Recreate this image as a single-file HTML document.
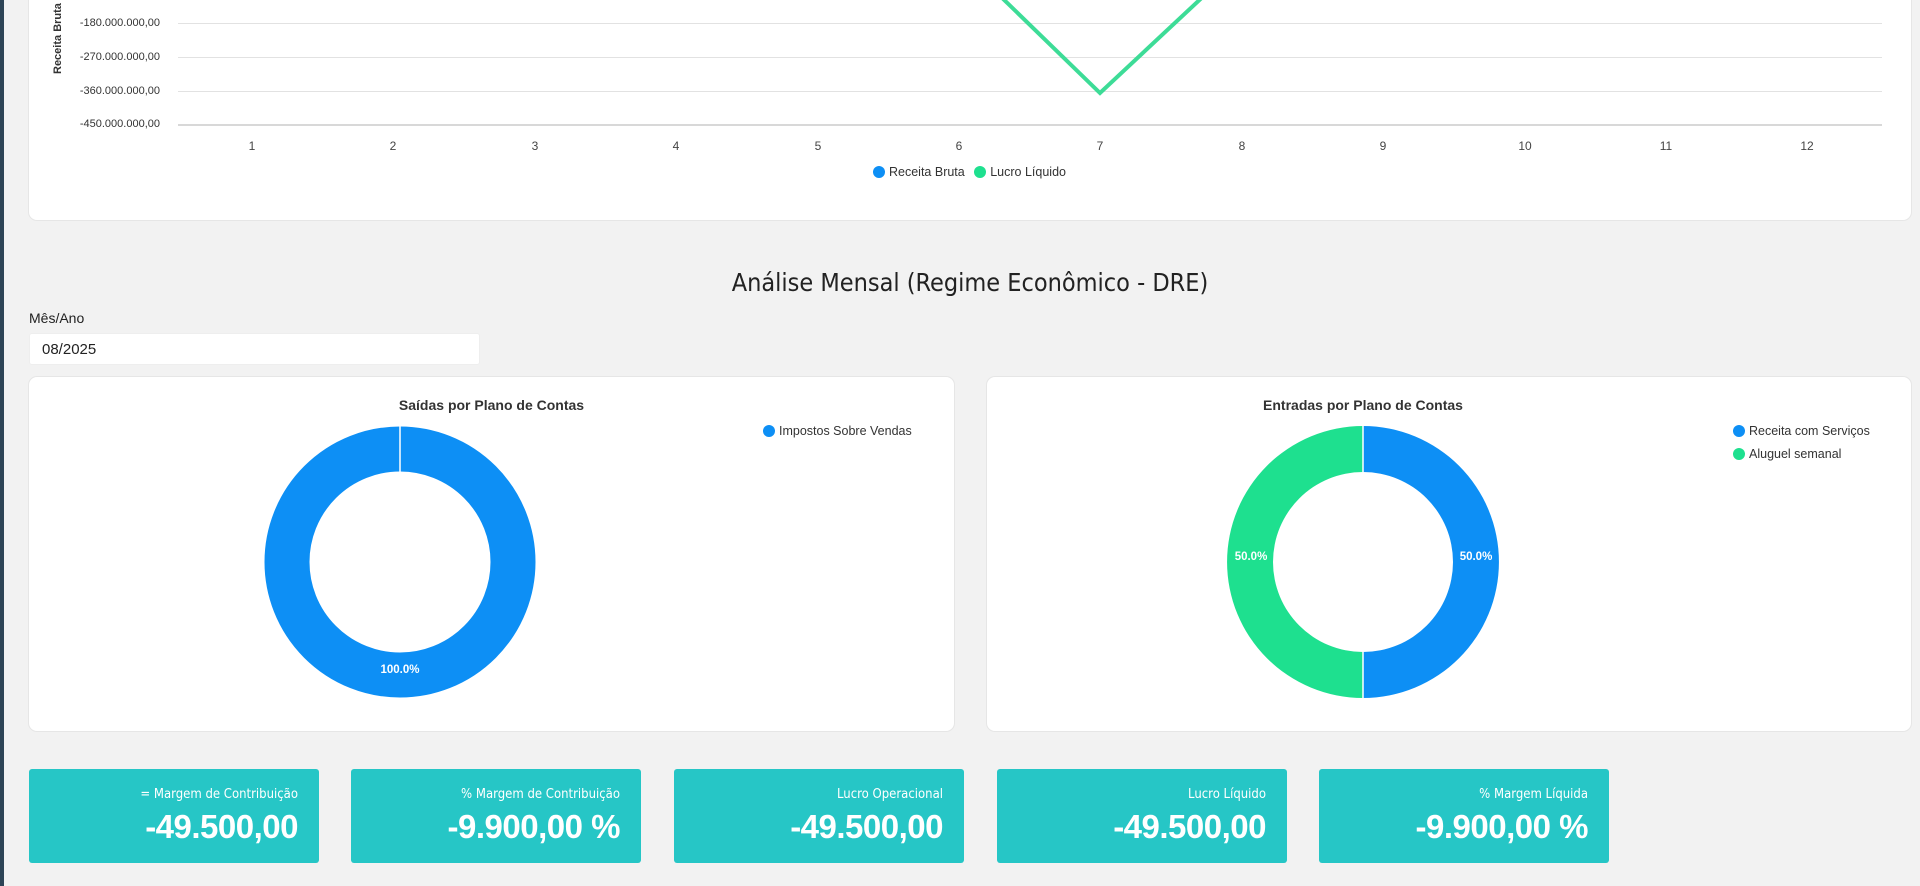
<!DOCTYPE html>
<html><head><meta charset="utf-8"><style>
*{margin:0;padding:0;box-sizing:border-box}
body{width:1920px;height:886px;background:#f2f2f2;position:relative;overflow:hidden;font-family:"Liberation Sans",Arial,sans-serif;color:#333}
.abs{position:absolute}
.card{position:absolute;background:#fff;border-radius:8px;box-shadow:0 0 0 1px #e6e6e6}
.yl{position:absolute;right:1760px;font-size:11px;color:#333;width:150px;text-align:right;transform:translateY(-50%)}
.grid{position:absolute;left:178px;width:1704px;height:1px;background:#e2e2e2}
.xl{position:absolute;top:139px;font-size:12px;color:#444;width:20px;margin-left:-10px;text-align:center}
.dot{display:inline-block;width:12px;height:12px;border-radius:50%;vertical-align:-2px;margin-right:4px}
.lg{position:absolute;font-size:12.5px;color:#333;white-space:nowrap}
.ct{position:absolute;font-weight:bold;font-size:14px;color:#333;text-align:center}
.kpi{position:absolute;top:769px;width:290px;height:94px;background:#26c6c6;border-radius:3px;color:#fff;text-align:right;padding-right:21px}
.kpi .l{font-size:14px;margin-top:18px;font-family:"DejaVu Sans Condensed","Liberation Sans",sans-serif;font-size:13px}
.kpi .v{font-size:33px;font-weight:bold;margin-top:6px;letter-spacing:-0.5px}
.pl{position:absolute;color:#fff;font-weight:bold;font-size:11.5px;transform:translate(-50%,-50%)}
</style></head><body>
<div class="abs" style="left:0;top:0;width:4px;height:886px;background:#2d4456"></div>

<div class="card" style="left:29px;top:-20px;width:1882px;height:240px"></div>
<div class="abs" style="left:52px;top:0;width:16px;height:74px;overflow:hidden"><div style="position:absolute;left:0;top:74px;transform-origin:0 0;transform:rotate(-90deg);font-weight:bold;font-size:11px;white-space:nowrap;width:110px">Receita Bruta</div></div>
<div class="grid" style="top:23px"></div>
<div class="grid" style="top:57px"></div>
<div class="grid" style="top:91px"></div>
<div class="grid" style="top:124px;height:2px;background:#d8d8d8"></div>
<div class="yl" style="top:23px">-180.000.000,00</div>
<div class="yl" style="top:57px">-270.000.000,00</div>
<div class="yl" style="top:91px">-360.000.000,00</div>
<div class="yl" style="top:124px">-450.000.000,00</div>
<div class="xl" style="left:252px">1</div><div class="xl" style="left:393px">2</div><div class="xl" style="left:535px">3</div><div class="xl" style="left:676px">4</div><div class="xl" style="left:818px">5</div><div class="xl" style="left:959px">6</div><div class="xl" style="left:1100px">7</div><div class="xl" style="left:1242px">8</div><div class="xl" style="left:1383px">9</div><div class="xl" style="left:1525px">10</div><div class="xl" style="left:1666px">11</div><div class="xl" style="left:1807px">12</div>
<svg class="abs" style="left:0;top:0" width="1920" height="130"><polyline points="996,-8 1100,93 1208,-8" fill="none" stroke="#3ddc97" stroke-width="4"/></svg>
<div class="lg" style="left:873px;top:165px"><span class="dot" style="background:#0d8ff5"></span>Receita Bruta <span class="dot" style="background:#1ee08f;margin-left:6px"></span>Lucro Líquido</div>

<div class="abs" style="left:0;width:1940px;top:268px;text-align:center;font-size:25px;color:#222;font-family:'DejaVu Sans Condensed','Liberation Sans',sans-serif">Análise Mensal (Regime Econômico - DRE)</div>
<div class="abs" style="left:29px;top:310px;font-size:14px;color:#222">Mês/Ano</div>
<div class="abs" style="left:29px;top:333px;width:451px;height:32px;background:#fff;border-radius:3px;border:1px solid #eee;font-size:15px;padding:7px 12px;color:#222">08/2025</div>

<div class="card" style="left:29px;top:377px;width:925px;height:354px"></div>
<div class="card" style="left:987px;top:377px;width:924px;height:354px"></div>
<div class="ct" style="left:29px;width:925px;top:397px">Saídas por Plano de Contas</div>
<div class="ct" style="left:987px;width:752px;top:397px">Entradas por Plano de Contas</div>

<svg class="abs" style="left:0;top:0" width="1920" height="886">
<circle cx="400" cy="562" r="113" fill="none" stroke="#0d8ff5" stroke-width="45"/>
<line x1="400" y1="425" x2="400" y2="472" stroke="#fff" stroke-width="1.5"/>
<path d="M1363 426 A136 136 0 0 1 1363 698 L1363 652 A90 90 0 0 0 1363 472 Z" fill="#0d8ff5"/>
<path d="M1363 426 A136 136 0 0 0 1363 698 L1363 652 A90 90 0 0 1 1363 472 Z" fill="#1ee08f"/>
<line x1="1363" y1="425" x2="1363" y2="472" stroke="#fff" stroke-width="1.5"/>
<line x1="1363" y1="652" x2="1363" y2="699" stroke="#fff" stroke-width="1.5"/>
</svg>
<div class="pl" style="left:400px;top:670px">100.0%</div>
<div class="pl" style="left:1251px;top:557px">50.0%</div>
<div class="pl" style="left:1476px;top:557px">50.0%</div>
<div class="lg" style="left:763px;top:424px"><span class="dot" style="background:#0d8ff5"></span>Impostos Sobre Vendas</div>
<div class="lg" style="left:1733px;top:424px"><span class="dot" style="background:#0d8ff5"></span>Receita com Serviços</div>
<div class="lg" style="left:1733px;top:447px"><span class="dot" style="background:#1ee08f"></span>Aluguel semanal</div>

<div class="kpi" style="left:29px"><div class="l">= Margem de Contribuição</div><div class="v">-49.500,00</div></div>
<div class="kpi" style="left:351px"><div class="l">% Margem de Contribuição</div><div class="v">-9.900,00 %</div></div>
<div class="kpi" style="left:674px"><div class="l">Lucro Operacional</div><div class="v">-49.500,00</div></div>
<div class="kpi" style="left:997px"><div class="l">Lucro Líquido</div><div class="v">-49.500,00</div></div>
<div class="kpi" style="left:1319px"><div class="l">% Margem Líquida</div><div class="v">-9.900,00 %</div></div>
</body></html>
